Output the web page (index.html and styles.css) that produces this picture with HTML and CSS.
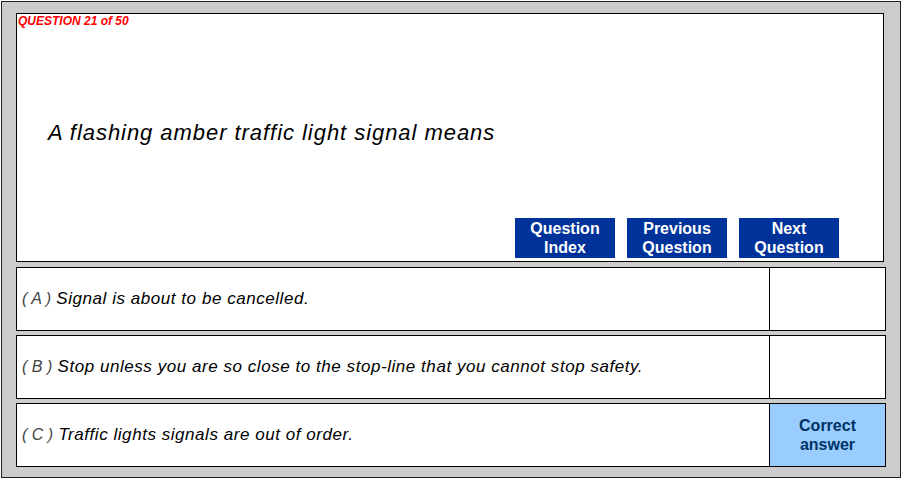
FILE: index.html
```html
<!DOCTYPE html>
<html>
<head>
<meta charset="utf-8">
<link rel="stylesheet" href="styles.css">
</head>
<body>
<div class="frame">
  <div class="question-box">
    <div class="q-num">QUESTION 21 of 50</div>
    <div class="q-text">A flashing amber traffic light signal means</div>
    <div class="nav">
      <div class="btn">Question<br>Index</div>
      <div class="btn">Previous<br>Question</div>
      <div class="btn">Next<br>Question</div>
    </div>
  </div>
  <div class="answers">
    <div class="answer">
      <div class="a-text"><span class="letter">( A )</span> Signal is about to be cancelled.</div>
      <div class="a-mark"></div>
    </div>
    <div class="answer">
      <div class="a-text"><span class="letter">( B )</span> Stop unless you are so close to the stop-line that you cannot stop safety.</div>
      <div class="a-mark"></div>
    </div>
    <div class="answer">
      <div class="a-text"><span class="letter">( C )</span> Traffic lights signals are out of order.</div>
      <div class="a-mark correct">Correct<br>answer</div>
    </div>
  </div>
</div>
</body>
</html>
```

FILE: styles.css
```css
* { box-sizing: border-box; }
html, body { margin: 0; padding: 0; background: #fff; }
body { width: 902px; height: 479px; overflow: hidden; font-family: "Liberation Sans", Arial, sans-serif; }

.frame {
  margin: 1px;
  width: 900px;
  height: 477px;
  border: 1px solid #222;
  background: #cccccc;
  padding: 11px 0 0 14px;
  display: flex;
  flex-direction: column;
}

.question-box {
  width: 868px;
  height: 249px;
  border: 1px solid #000;
  background: #fff;
  display: flex;
  flex-direction: column;
}

.q-num {
  color: #ff0000;
  font-weight: bold;
  font-style: italic;
  font-size: 12px;
  line-height: 13px;
  padding: 1px 0 0 1px;
}

.q-text {
  font-style: italic;
  font-size: 22px;
  letter-spacing: 0.95px;
  line-height: 26px;
  color: #000;
  padding: 92px 0 0 31px;
  flex: 1;
}

.nav {
  display: flex;
  justify-content: flex-end;
  gap: 12px;
  padding: 0 44px 3px 0;
}

.btn {
  width: 100px;
  height: 40px;
  background: #003399;
  color: #fff;
  font-weight: bold;
  font-size: 16px;
  line-height: 19px;
  text-align: center;
  padding-top: 1px;
}

.answers {
  display: flex;
  flex-direction: column;
  gap: 4px;
  margin-top: 5px;
}

.answer {
  width: 870px;
  height: 64px;
  border: 1px solid #000;
  background: #fff;
  display: flex;
}

.a-text {
  width: 753px;
  border-right: 1px solid #000;
  display: flex;
  align-items: center;
  padding-left: 5px;
  font-style: italic;
  font-size: 17px;
  letter-spacing: 0.55px;
  color: #000;
  white-space: pre;
}

.letter {
  color: #444;
  font-weight: normal;
  font-size: 16px;
  letter-spacing: 0;
}

.a-mark {
  flex: 1;
}

.a-mark.correct {
  background: #99ccff;
  color: #003366;
  font-weight: bold;
  font-size: 16px;
  line-height: 19px;
  text-align: center;
  display: flex;
  align-items: center;
  justify-content: center;
}
```
